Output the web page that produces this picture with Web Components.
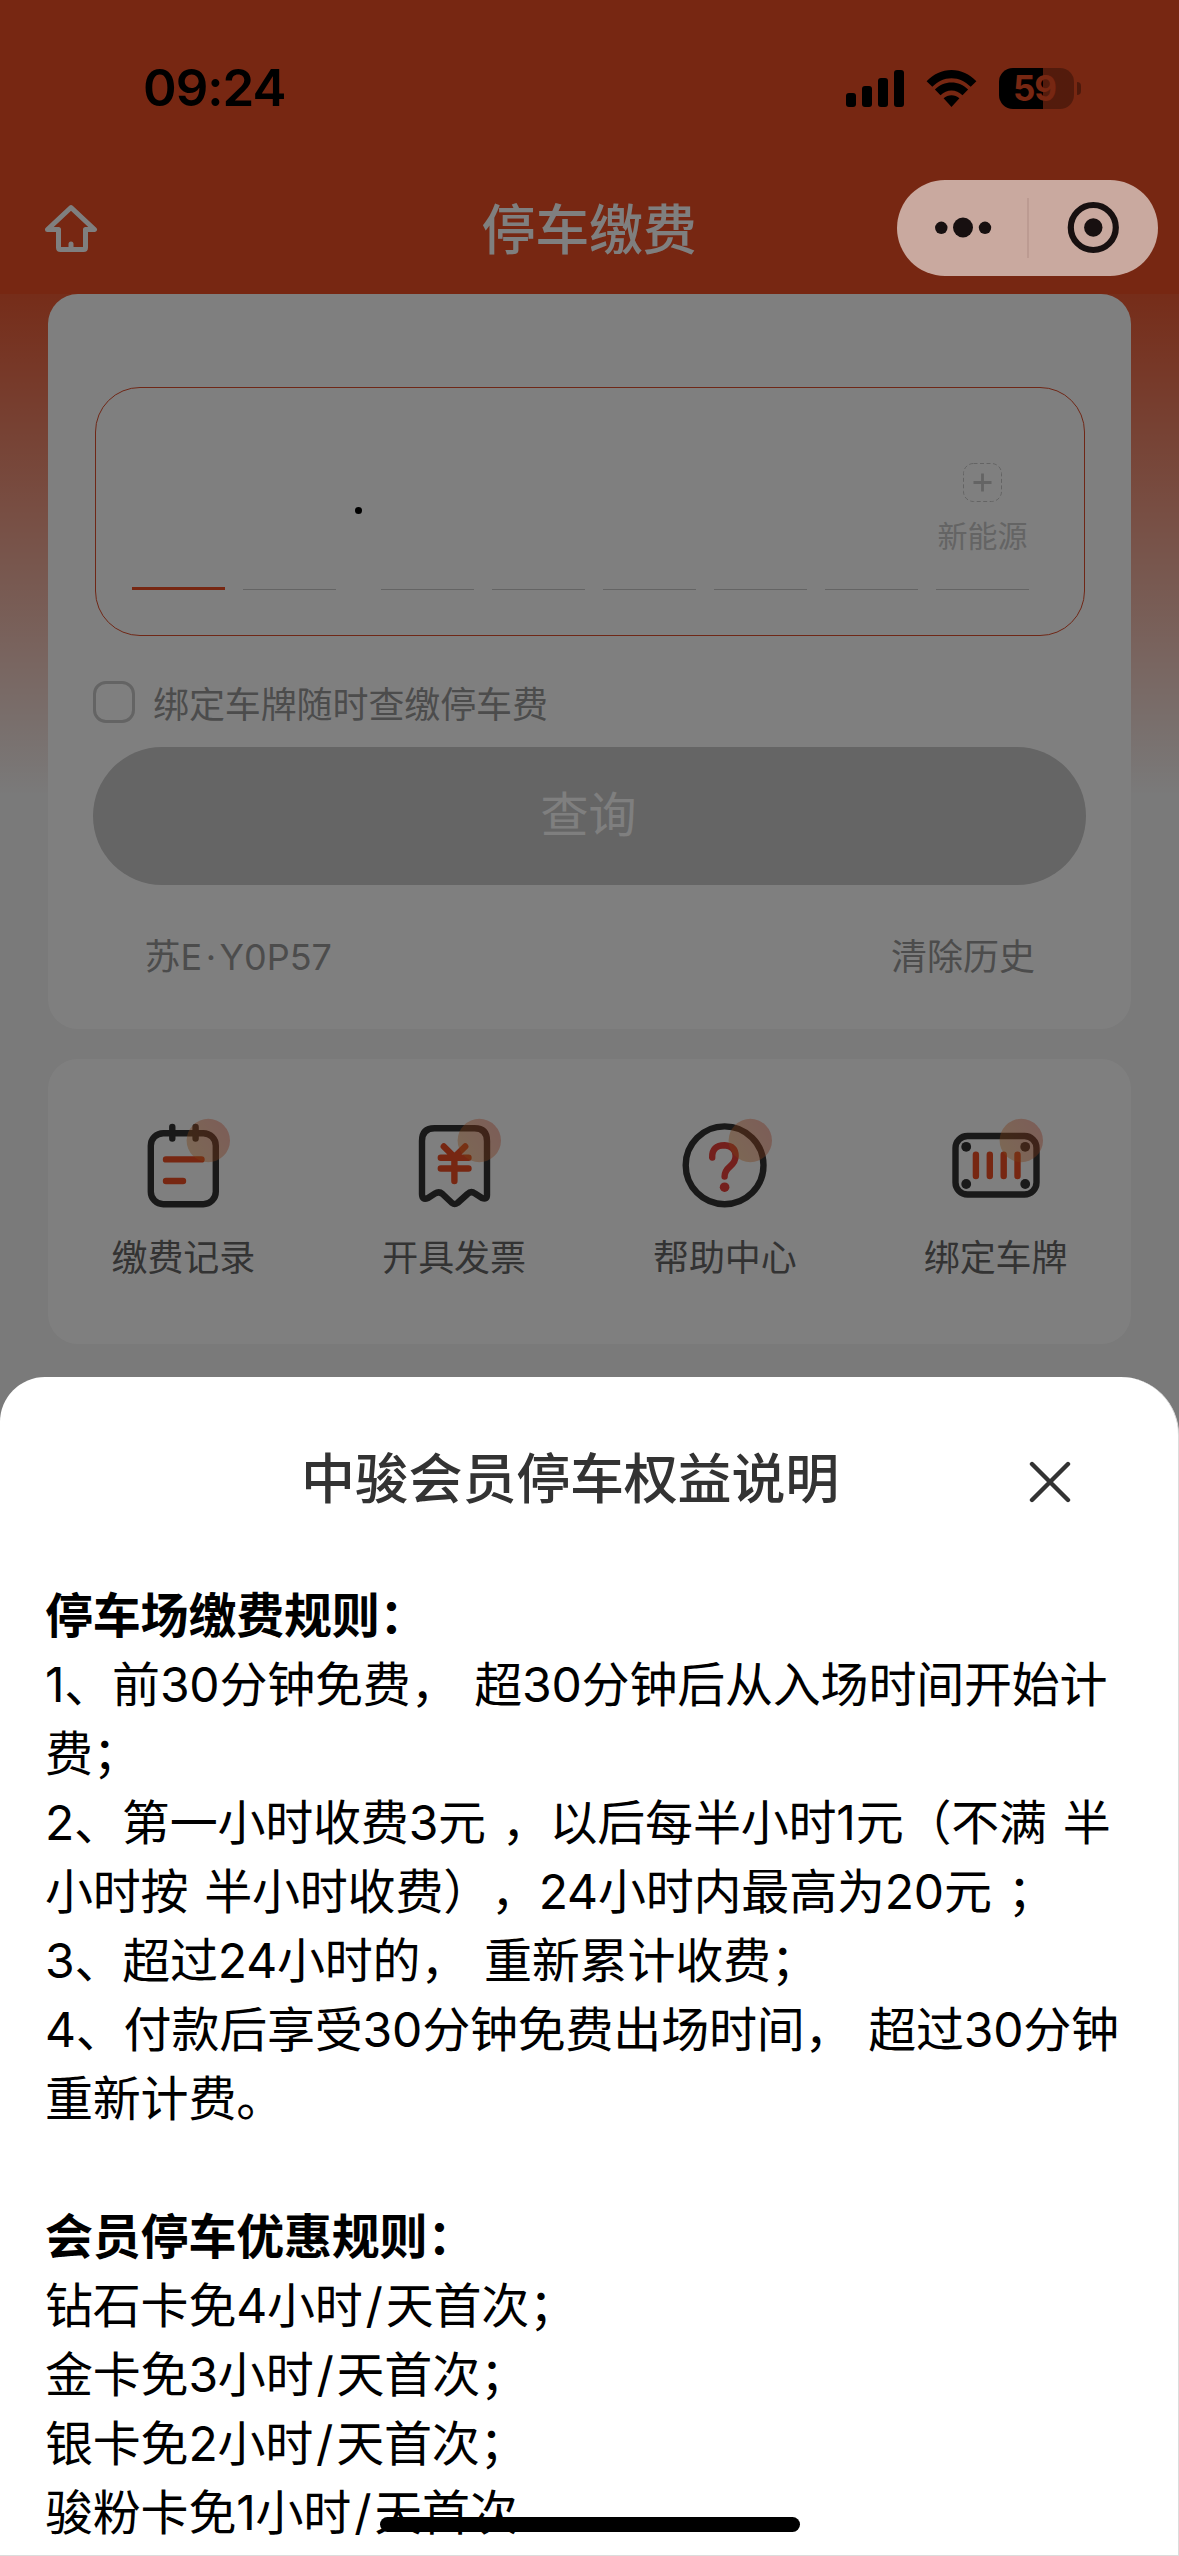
<!DOCTYPE html>
<html lang="zh-CN">
<head>
<meta charset="utf-8">
<title>停车缴费</title>
<style>
  html, body { margin: 0; padding: 0; }
  body { width: 1179px; height: 2556px; overflow: hidden; font-family: Inter, "Noto Sans CJK SC", sans-serif; text-spacing-trim: space-all; }
</style>
</head>
<body>
<parking-app></parking-app>
<script>
const define = (name, html) => {
  const t = document.createElement('template');
  t.innerHTML = html;
  customElements.define(name, class extends HTMLElement {
    constructor() {
      super();
      this.attachShadow({ mode: 'open' }).appendChild(t.content.cloneNode(true));
    }
  });
};

define('status-bar', `
<style>
  :host { display: flex; box-sizing: border-box; height: 162px; padding: 14px 98px 0 143px; align-items: center; justify-content: space-between; color: #000; }
  .time { font-size: 51px; line-height: 60px; font-weight: 600; letter-spacing: -1px; }
  .right { display: flex; align-items: center; }
  svg { display: block; }
  .wifi { margin-left: 22px; margin-right: 22px; }
  .battery { display: flex; align-items: center; gap: 2.5px; }
  .cell { box-sizing: border-box; width: 75px; height: 41px; border-radius: 14px; background: linear-gradient(90deg, #000 44px, rgba(0,0,0,.3) 44px); color: #ee4e24; font-size: 35px; line-height: 41px; font-weight: 700; text-align: center; letter-spacing: -1px; padding-right: 4px; }
  .nub { width: 4.5px; height: 13px; border-radius: 0 5px 5px 0; background: rgba(0,0,0,.35); }
</style>
<div class="time">09:24</div>
<div class="right">
  <svg width="58" height="37" viewBox="0 0 58 37"><rect x="0" y="23" width="10" height="14" rx="3"/><rect x="16" y="16" width="10" height="21" rx="3"/><rect x="32" y="8" width="10" height="29" rx="3"/><rect x="48" y="0" width="10" height="37" rx="3"/></svg>
  <svg class="wifi" width="51" height="37" viewBox="0 0 51 37"><path d="M0.6 11.2C7.5 4.2 16 0 25.5 0S43.500 4.200 50.400 11.200L44.700 16.800C39.300 11.600 33 8.200 25.500 8.200S11.700 11.600 6.300 16.800Z"/><path d="M8.900 19.600C13.400 15.200 19.200 12.600 25.500 12.600S37.600 15.200 42.100 19.600L36.500 25.300C33.300 22.300 29.600 20.600 25.500 20.600S17.700 22.300 14.500 25.300Z"/><path d="M17.600 28.300C19.800 26.200 22.600 25.200 25.500 25.200S31.200 26.200 33.400 28.300L25.500 37Z"/></svg>
  <div class="battery"><div class="cell">59</div><div class="nub"></div></div>
</div>`);

define('nav-bar', `
<style>
  :host { display: grid; grid-template-columns: 1fr auto 1fr; align-items: center; box-sizing: border-box; height: 132px; padding: 0 45px 0 44px; color: #fff; }
  h1 { margin: 0; padding-top: 5px; font-size: 54px; line-height: 70px; font-weight: 500; letter-spacing: -.2px; }
  svg { display: block; }
</style>
<svg width="54" height="48" viewBox="0 0 54 48" fill="none" stroke="#fff" stroke-width="5" stroke-linejoin="round" stroke-linecap="round"><path d="M27 3.500L50.500 25.500H41.500V43.500Q41.500 45.500 39.500 45.500H16.500Q14.500 45.500 14.500 43.500V25.500H3.500Z"/><path d="M27 40V44"/></svg>
<h1>停车缴费</h1><span></span>`);

define('mini-capsule', `
<style>
  :host { display: flex; width: 261px; height: 96px; border-radius: 48px; background: #c9a99f; }
  svg { display: block; }
</style>
<svg width="261" height="96" viewBox="0 0 261 96"><g fill="#171010"><circle cx="44.300" cy="47.800" r="6.200"/><circle cx="66" cy="47.500" r="10"/><circle cx="88" cy="47.800" r="6.200"/><circle cx="196.300" cy="47.500" r="9.200"/></g><circle cx="196.300" cy="47.500" r="22.500" fill="none" stroke="#171010" stroke-width="6.200"/><path d="M131 18V78" stroke="#b7978e" stroke-width="1.500"/></svg>`);

define('plate-input', `
<style>
  :host { display: flex; box-sizing: border-box; margin-left: 2px; width: 990px; height: 249px; border: 1px solid #df4e2c; border-radius: 45px; padding: 0 0 45px 36px; align-items: flex-end; gap: 18px; }
  .slot { display: flex; flex-direction: column; align-items: center; width: 93px; border-bottom: 1px solid #c8c8c8; }
  .active { border-bottom: 3px solid #ee4e24; }
  .dot { display: flex; justify-content: center; width: 9px; margin: 0 0 76px; }
  .dot::before { content: ""; width: 7.500px; height: 7.500px; border-radius: 50%; background: #000; }
  .add { display: flex; width: 39px; height: 39px; }
  .ne { font-size: 30px; line-height: 40px; color: #c8c8c8; margin: 14px 0 33px; white-space: nowrap; }
</style>
<div class="slot active"></div><div class="slot"></div><div class="dot"></div><div class="slot"></div><div class="slot"></div><div class="slot"></div><div class="slot"></div><div class="slot"></div>
<div class="slot"><svg class="add" viewBox="0 0 39 39" fill="none" stroke="#c8c8c8"><rect x=".5" y=".5" width="38" height="38" rx="10" stroke-dasharray="4 2.500"/><path d="M19.500 10.500V28.500M10.500 19.500H28.500" stroke-width="2.800"/></svg><span class="ne">新能源</span></div>`);

define('query-card', `
<style>
  :host { display: flex; flex-direction: column; box-sizing: border-box; height: 735px; border-radius: 30px; background: #fff; padding: 93px 45px 0; font-size: 36px; line-height: 48px; color: #999; }
  .bind { display: flex; align-items: center; height: 42px; margin-top: 45px; gap: 18px; letter-spacing: -.1px; }
  .bind span + span { padding-top: 5px; }
  .box { box-sizing: border-box; width: 42px; height: 42px; border: 3px solid #c8c8c8; border-radius: 13px; }
  .btn { display: flex; align-items: center; justify-content: center; height: 138px; margin-top: 24px; border-radius: 69px; background: #cacaca; color: #fff; font-size: 48px; line-height: 60px; padding: 0 2px 3px 0; box-sizing: border-box; }
  .history { display: flex; justify-content: space-between; margin-top: 48px; padding: 0 51px 0 51.500px; }
  i { font-style: normal; letter-spacing: 3.500px; }
</style>
<plate-input></plate-input>
<div class="bind"><span class="box"></span><span>绑定车牌随时查缴停车费</span></div>
<div class="btn">查询</div>
<div class="history"><span class="plate">苏<i>E·</i>Y0P57</span><span>清除历史</span></div>`);

define('service-item', `
<style>
  :host { display: flex; flex: 1; flex-direction: column; align-items: center; font-size: 36px; line-height: 48px; color: #666; letter-spacing: -.1px; }
  ::slotted(svg) { display: block; width: 90px; height: 90px; margin-bottom: 25px; overflow: visible; }
</style>
<slot name="icon"></slot><span><slot></slot></span>`);

const deco = (id) => `<defs><linearGradient id="${id}" x1="0" y1="1" x2="1" y2="0.400"><stop offset="0" stop-color="#f09028"/><stop offset="1" stop-color="#ee5a38"/></linearGradient></defs><circle cx="70.300" cy="21.500" r="21.700" fill="url(#${id})" opacity=".4" stroke="none"/>`;

define('service-card', `
<style>
  :host { display: flex; box-sizing: border-box; height: 285px; margin-top: 30px; border-radius: 30px; background: #fff; padding-top: 60px; }
</style>
<service-item><svg slot="icon" viewBox="0 0 90 90" fill="none" stroke-width="6.400" stroke-linecap="round"><rect x="12.800" y="14.200" width="65" height="71" rx="12.500" stroke="#333"/><path d="M34.300 8V19.500M57.600 8V19.500" stroke="#333"/><path d="M28 40.400H63.500M28 62H45" stroke="#ee4e24"/>${deco('d1')}</svg>缴费记录</service-item>
<service-item><svg slot="icon" viewBox="0 0 90 90" fill="none" stroke-width="6.400" stroke-linecap="round" stroke-linejoin="round"><path d="M13 22Q13 9.300 25.500 9.300H65.500Q78 9.300 78 22V76Q78 81 73 79L66 74.500Q62 71.500 58.500 75L48.500 84Q45.700 86 43 84L33.500 75Q30 72 26 74.500L19 79Q13 81.500 13 75Z" stroke="#333"/><path d="M34.800 27.500L45.400 38L56.200 27.500M45.400 38V62M31.800 38.700H59.500M31.800 49.500H59.500" stroke="#ee4e24"/>${deco('d2')}</svg>开具发票</service-item>
<service-item><svg slot="icon" viewBox="0 0 90 90" fill="none" stroke-width="6.400" stroke-linecap="round"><circle cx="44.600" cy="46.300" r="38.900" stroke="#333"/><path d="M32.200 38.500Q31.800 26.300 44.600 26.300Q55.600 27 55.600 37Q55.600 42.500 50.500 47Q44.600 52 44.600 57.500" stroke="#e8413a"/><circle cx="44.600" cy="68.200" r="4.800" fill="#e8413a"/>${deco('d3')}</svg>帮助中心</service-item>
<service-item><svg slot="icon" viewBox="0 0 90 90" fill="none" stroke-width="6.400" stroke-linecap="round"><rect x="4.500" y="17" width="81" height="58.500" rx="12" stroke="#333"/><g fill="#333"><circle cx="15.200" cy="27.800" r="4.900"/><circle cx="74.200" cy="27.800" r="4.900"/><circle cx="15.200" cy="65" r="4.900"/><circle cx="74.200" cy="65" r="4.900"/></g><path d="M24.900 35.700V57M38.800 35.700V57M52.700 35.700V57M66.500 35.700V57" stroke="#ee4e24"/>${deco('d4')}</svg>绑定车牌</service-item>`);

define('rules-sheet', `
<style>
  :host { display: block; box-sizing: border-box; background: #fff; border-radius: 45px 58px 0 0; overflow: hidden; }
  header { display: flex; align-items: center; justify-content: space-between; padding: 71px 107px 0 301px; height: 60px; }
  h2 { margin: 0; padding-top: 3px; font-size: 54px; line-height: 60px; font-weight: 500; color: #333; white-space: nowrap; letter-spacing: -.2px; }
  svg { display: block; margin-top: 7px; }
  article { padding: 72.500px 0 0 45px; font-size: 48px; line-height: 69px; color: #000; white-space: pre; word-spacing: 2.500px; letter-spacing: -.2px; }
  p { margin: 0; height: 69px; }
  b { font-weight: 700; }
  i { font-style: normal; padding: 0 3px; }
</style>
<header><h2>中骏会员停车权益说明</h2><svg width="42" height="42" viewBox="0 0 42 42" stroke="#333" stroke-width="4.400" stroke-linecap="round"><path d="M3 3L39 39M39 3L3 39"/></svg></header>
<article><p><b>停车场缴费规则：</b></p><p>1、前30分钟免费， 超30分钟后从入场时间开始计</p><p>费；</p><p>2、第一小时收费3元 ，以后每半小时1元（不满 半</p><p>小时按 半小时收费），24小时内最高为20元 ；</p><p>3、超过24小时的， 重新累计收费；</p><p>4、付款后享受30分钟免费出场时间， 超过30分钟</p><p>重新计费。</p><p></p><p><b>会员停车优惠规则：</b></p><p>钻石卡免4小时<i>/</i>天首次；</p><p>金卡免3小时<i>/</i>天首次；</p><p>银卡免2小时<i>/</i>天首次；</p><p>骏粉卡免1小时<i>/</i>天首次</p></article>`);

define('parking-app', `
<style>
  :host { display: block; position: relative; width: 1179px; height: 2556px; overflow: hidden; background: #f4f4f4; }
  .top { height: 294px; background: #ee4e24; }
  main { box-sizing: border-box; height: 1083px; padding: 0 48px; background: linear-gradient(180deg, #ed5a33 0, #f4f4f4 500px); }
  .mask { position: absolute; inset: 0; background: rgba(0,0,0,.5); }
  mini-capsule { position: absolute; left: 897px; top: 180px; }
  rules-sheet { position: absolute; left: 0; right: 0; top: 1377px; bottom: 0; border-right: 1px solid #dcdcdc; border-bottom: 1px solid #dcdcdc; }
  .home { position: absolute; left: 379.500px; top: 2517px; width: 420px; height: 15px; border-radius: 8px; background: #000; }
</style>
<div class="top"><status-bar></status-bar><nav-bar></nav-bar></div>
<main><query-card></query-card><service-card></service-card></main>
<div class="mask"></div>
<mini-capsule></mini-capsule>
<rules-sheet></rules-sheet>
<div class="home"></div>`);
</script>
</body>
</html>
